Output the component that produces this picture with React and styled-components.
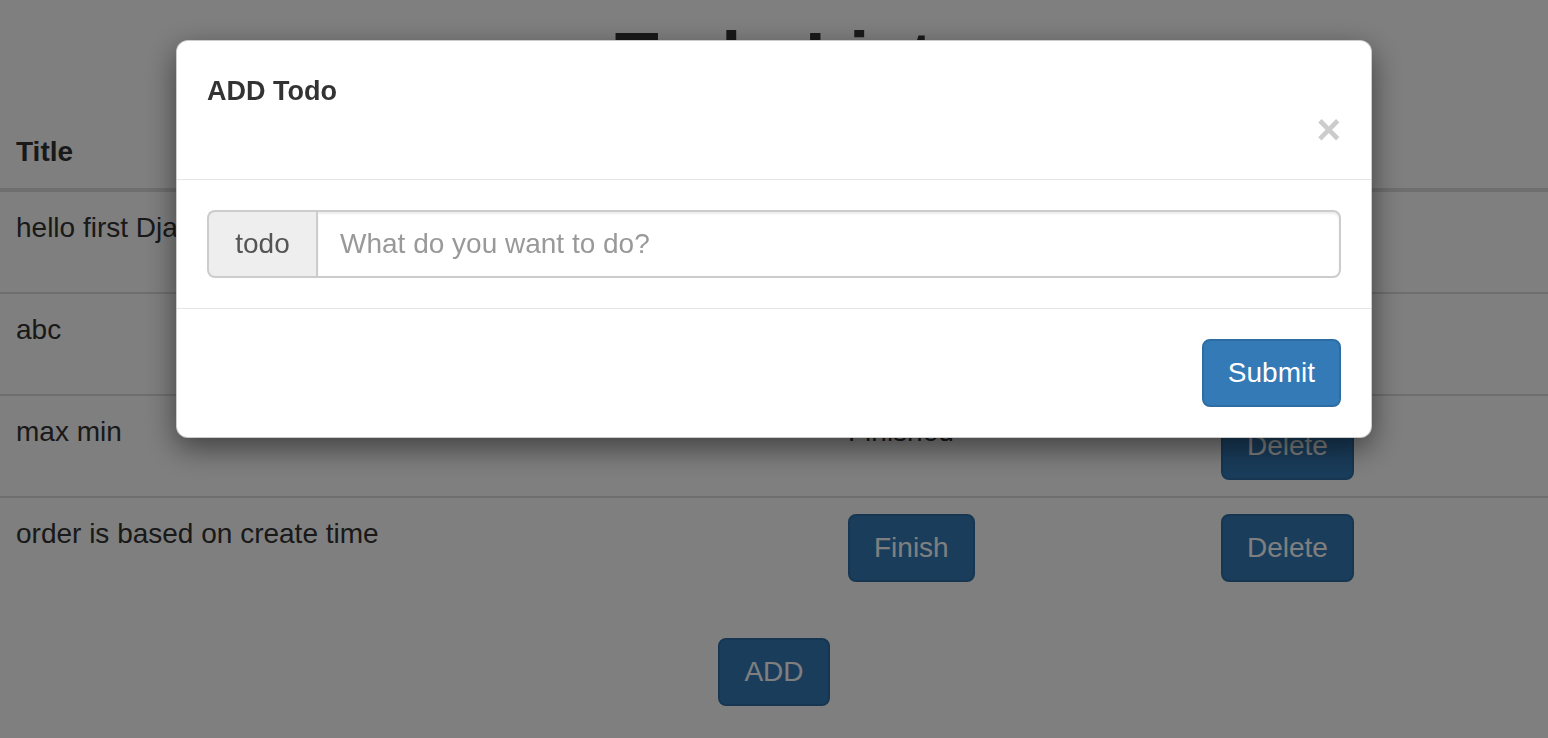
import React from "react";
import styled, { createGlobalStyle } from "styled-components";

const GlobalStyle = createGlobalStyle`
  body {
    margin: 0;
    font-family: "Liberation Sans", Arial, sans-serif;
    font-size: 28px;
    line-height: 40px;
    color: #333;
    background: #fff;
  }
`;

const todos = [
  { title: "hello first Django app", done: true },
  { title: "abc", done: true },
  { title: "max min", done: true },
  { title: "order is based on create time", done: false },
];

const App = () => {
  return (
    <>
      <GlobalStyle />
      <Page>
        <Heading>Todo List</Heading>
        <Table>
          <thead>
            <tr>
              <Th $w="832px">Title</Th>
              <Th $w="373px">Status</Th>
              <Th>Action</Th>
            </tr>
          </thead>
          <tbody>
            {todos.map((t) => (
              <tr key={t.title}>
                <Td>{t.title}</Td>
                <Td>{t.done ? "Finished" : <Button>Finish</Button>}</Td>
                <Td>
                  <Button>Delete</Button>
                </Td>
              </tr>
            ))}
          </tbody>
        </Table>
        <Center>
          <Button>ADD</Button>
        </Center>
      </Page>

      <Backdrop />
      <ModalWrap>
        <Dialog>
          <Header>
            <Title>ADD Todo</Title>
            <CloseRow>
              <Close aria-label="Close">×</Close>
            </CloseRow>
          </Header>
          <Body>
            <InputGroup>
              <Addon>todo</Addon>
              <Input placeholder="What do you want to do?" />
            </InputGroup>
          </Body>
          <Footer>
            <Button>Submit</Button>
          </Footer>
        </Dialog>
      </ModalWrap>
    </>
  );
};

const Page = styled.div`
  width: 100%;
`;

const Heading = styled.h1`
  margin: 19px 0 18px;
  text-align: center;
  font-size: 72px;
  line-height: 79px;
  font-weight: 700;
`;

const Table = styled.table`
  width: 100%;
  table-layout: fixed;
  border-collapse: collapse;
  margin-bottom: 40px;
`;

const Th = styled.th`
  width: ${(p) => p.$w || "auto"};
  box-sizing: border-box;
  text-align: left;
  padding: 16px;
  border-bottom: 4px solid #ddd;
  font-weight: 700;
`;

const Td = styled.td`
  padding: 16px;
  border-top: 2px solid #ddd;
  vertical-align: top;
  white-space: nowrap;
`;

const Center = styled.div`
  display: flex;
  justify-content: center;
`;

const Button = styled.button`
  font-family: inherit;
  font-size: 28px;
  line-height: 40px;
  padding: 12px 24px;
  color: #fff;
  background: #337ab7;
  border: 2px solid #2e6da4;
  border-radius: 8px;
  cursor: pointer;
`;

const Backdrop = styled.div`
  position: fixed;
  inset: 0;
  background: rgba(0, 0, 0, 0.5);
`;

const ModalWrap = styled.div`
  position: fixed;
  inset: 0;
  display: flex;
  justify-content: center;
  align-items: flex-start;
  padding-top: 40px;
`;

const Dialog = styled.div`
  width: 1196px;
  box-sizing: border-box;
  background: #fff;
  border: 1px solid rgba(0, 0, 0, 0.2);
  border-radius: 12px;
  box-shadow: 0 10px 30px rgba(0, 0, 0, 0.5);
`;

const Header = styled.div`
  padding: 30px 30px;
  border-bottom: 1px solid #e5e5e5;
`;

const Title = styled.h4`
  margin: 0;
  font-size: 27px;
  line-height: 40px;
  font-weight: 700;
  color: #333;
`;

const CloseRow = styled.div`
  display: flex;
  justify-content: flex-end;
  height: 38px;
`;

const Close = styled.button`
  padding: 0;
  background: transparent;
  border: 0;
  font-family: "Liberation Sans", Arial, sans-serif;
  font-size: 42px;
  font-weight: 700;
  line-height: 38px;
  color: #ccc;
  cursor: pointer;
`;

const Body = styled.div`
  padding: 30px;
`;

const InputGroup = styled.div`
  display: flex;
  height: 68px;
`;

const Addon = styled.span`
  display: flex;
  align-items: center;
  justify-content: center;
  width: 109px;
  box-sizing: border-box;
  background: #eee;
  color: #555;
  border: 2px solid #ccc;
  border-right: 0;
  border-radius: 8px 0 0 8px;
`;

const Input = styled.input`
  flex: 1;
  min-width: 0;
  box-sizing: border-box;
  padding: 0 22px;
  font-family: inherit;
  font-size: 28px;
  color: #555;
  border: 2px solid #ccc;
  border-radius: 0 8px 8px 0;
  box-shadow: inset 0 2px 2px rgba(0, 0, 0, 0.075);
  outline: none;

  &::placeholder {
    color: #999;
  }
`;

const Footer = styled.div`
  display: flex;
  justify-content: flex-end;
  padding: 30px;
  border-top: 1px solid #e5e5e5;
`;

export default App;
